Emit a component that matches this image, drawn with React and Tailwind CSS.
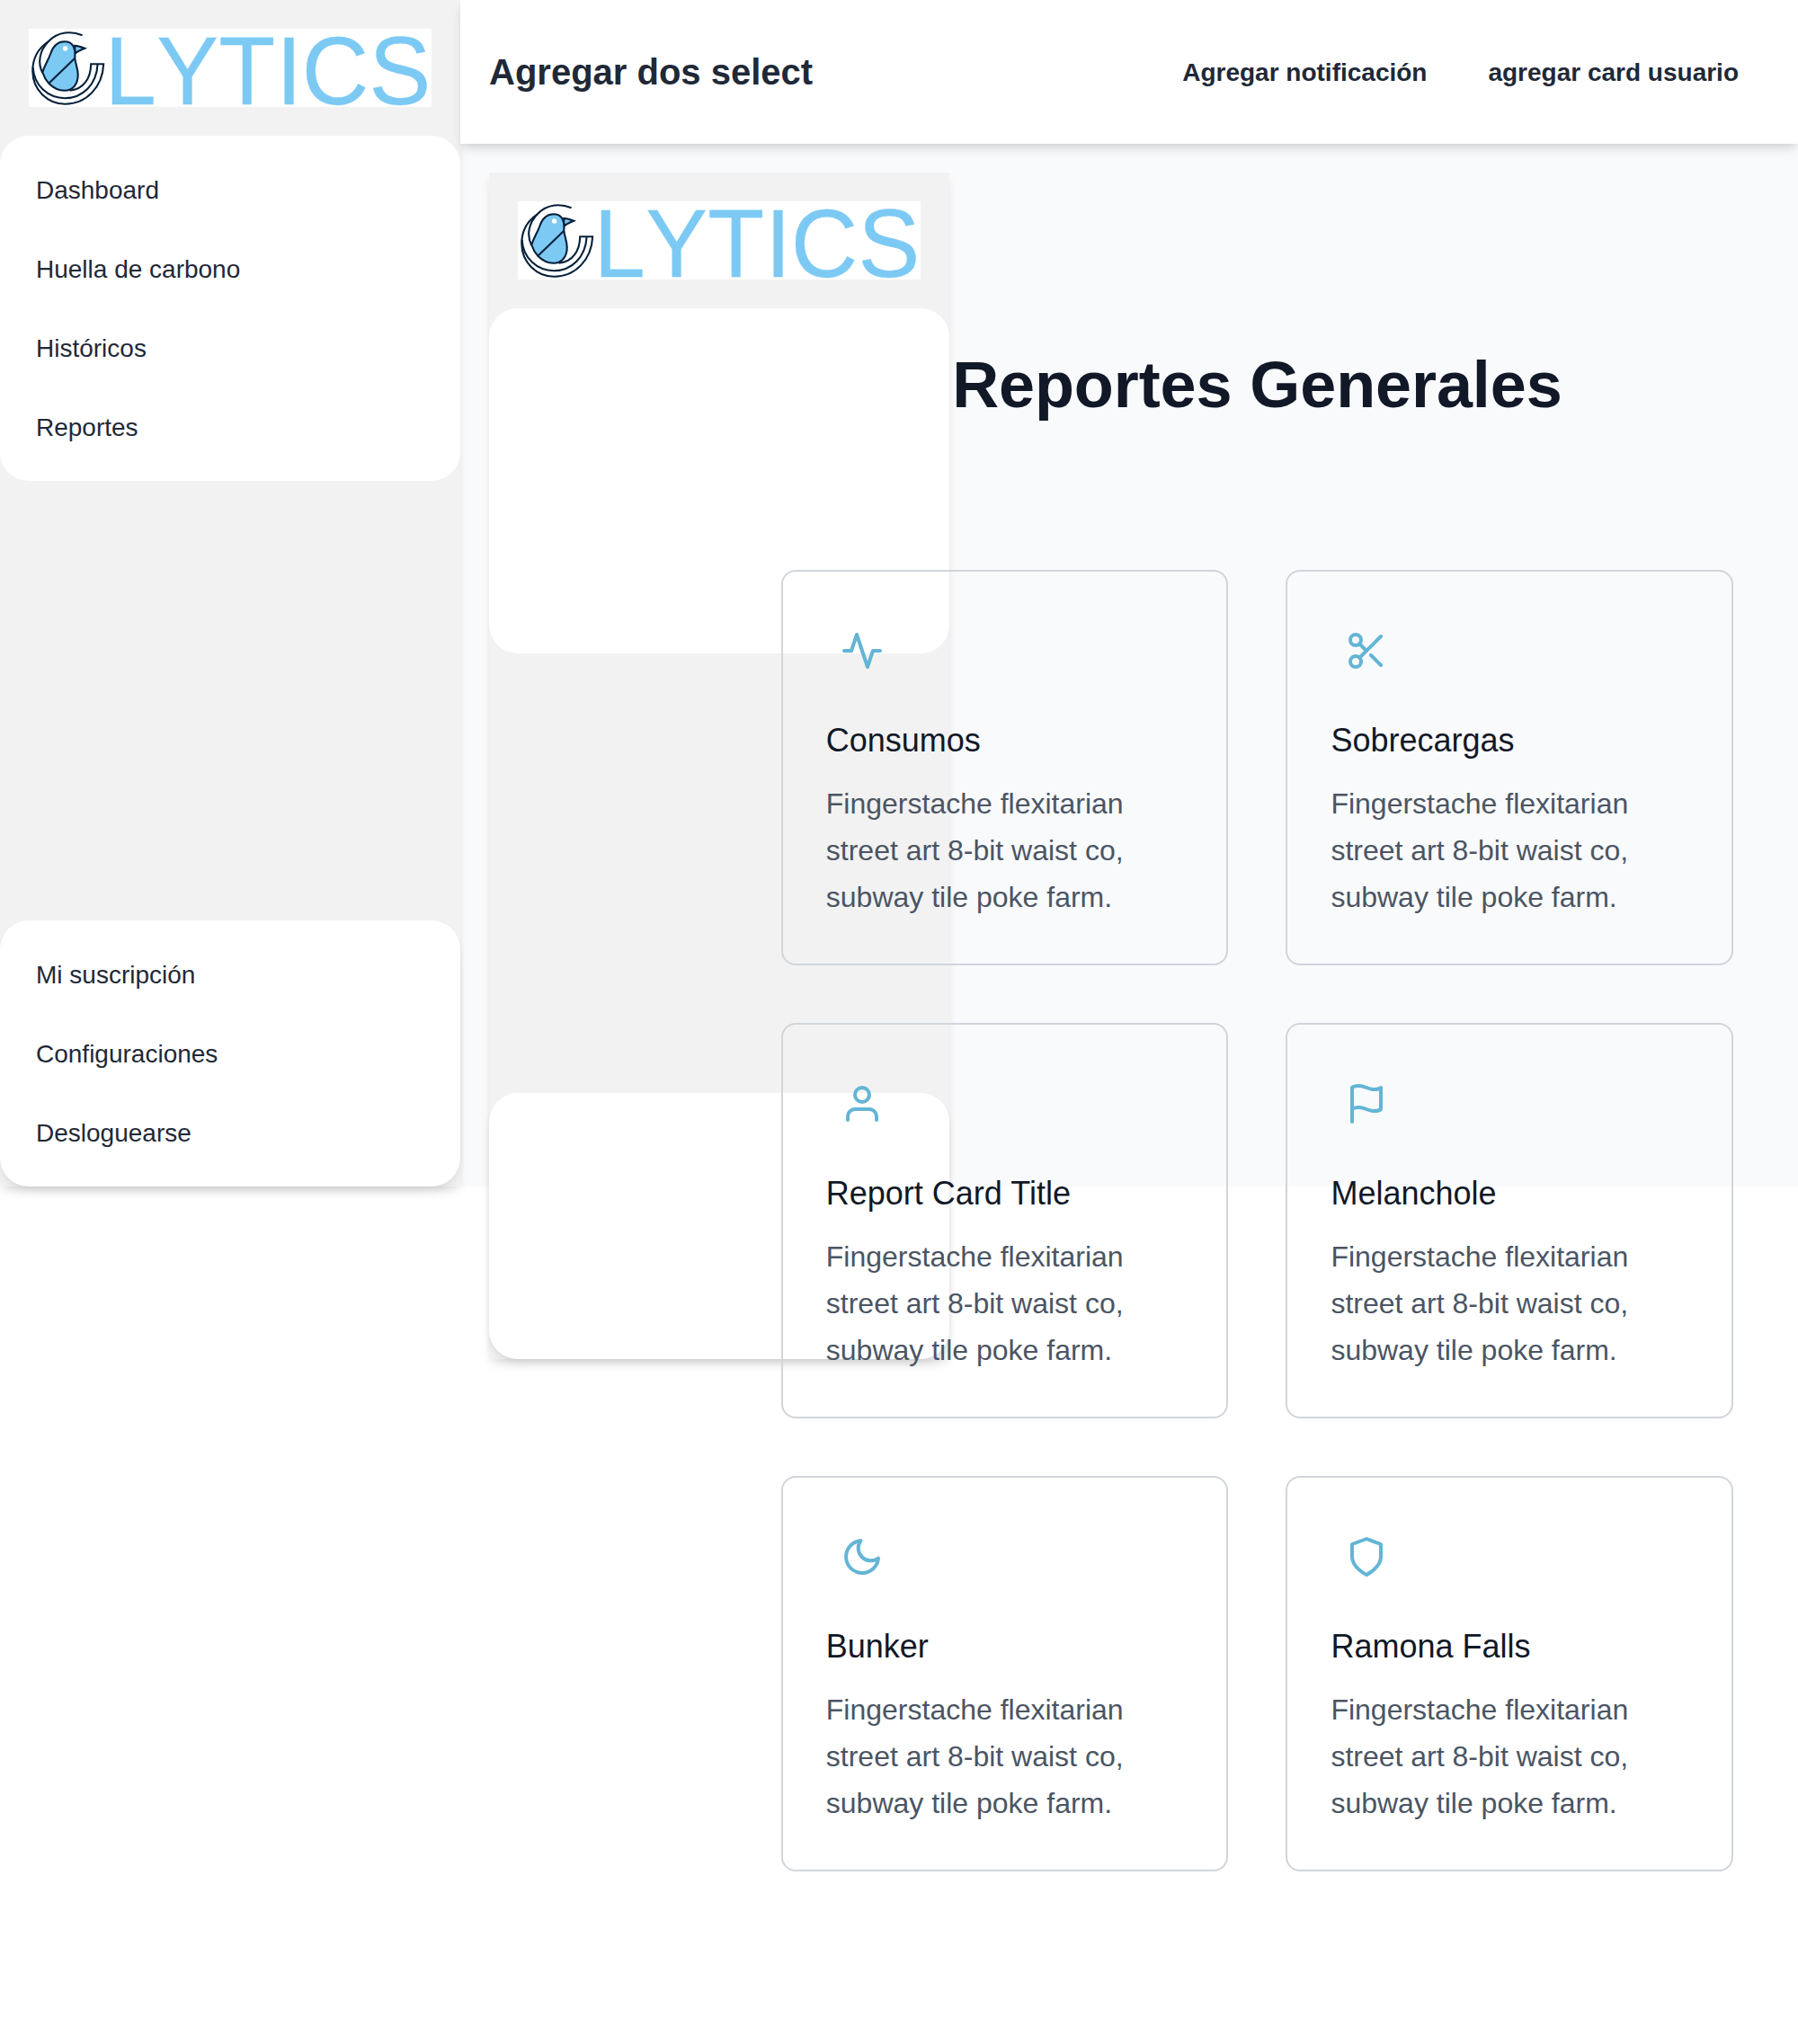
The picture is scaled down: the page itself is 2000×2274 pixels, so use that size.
import React from "react";

const PRIMARY_LINKS = ["Dashboard", "Huella de carbono", "Históricos", "Reportes"];
const SECONDARY_LINKS = ["Mi suscripción", "Configuraciones", "Desloguearse"];

const REPORTS = [
  { title: "Consumos", icon: <path d="M22 12h-4l-3 9L9 3l-3 9H2" /> },
  {
    title: "Sobrecargas",
    icon: (
      <>
        <circle cx="6" cy="6" r="3" />
        <circle cx="6" cy="18" r="3" />
        <path d="M20 4L8.12 15.88M14.47 14.48L20 20M8.12 8.12L12 12" />
      </>
    ),
  },
  {
    title: "Report Card Title",
    icon: (
      <>
        <path d="M20 21v-2a4 4 0 00-4-4H8a4 4 0 00-4 4v2" />
        <circle cx="12" cy="7" r="4" />
      </>
    ),
  },
  {
    title: "Melanchole",
    icon: <path d="M4 15s1-1 4-1 5 2 8 2 4-1 4-1V3s-1 1-4 1-5-2-8-2-4 1-4 1zM4 22v-7" />,
  },
  { title: "Bunker", icon: <path d="M21 12.79A9 9 0 1111.21 3 7 7 0 0021 12.79z" /> },
  { title: "Ramona Falls", icon: <path d="M12 22s8-4 8-10V5l-8-3-8 3v7c0 6 8 10 8 10z" /> },
];

function Logo() {
  return (
    <svg
      viewBox="0 0 448 87"
      className="block h-[87px] w-[448px] overflow-visible bg-white"
      role="img"
    >
      <g fill="none" stroke="#04203a" strokeWidth="2.1">
        <path d="M59.6 7.2C48 2.5 33 2.5 22 14C12 24 9.5 38 15.3 49" />
        <path d="M22 14C10 22 4.3 34 4.3 47C4.3 68 21 83.7 40.3 83.7C64 83.7 82 65 83.2 39.2H69.2C69 55 61 67.5 45.5 68.8" />
        <path d="M4.6 43C6 63 21 77.2 40.3 77.2C60 77.2 75.5 62 76.6 39.2" />
        <path
          d="M51.2 18.9C55 18.9 58.5 20.3 62.3 21.7C58.5 23.5 54.5 24.5 51.5 27.5Z"
          fill="#7cc9f4"
        />
        <path
          d="M51.3 32.5C52.2 21 49 14.2 39.7 14.2C31.5 14.2 27.3 19 24.5 27C21.8 35 17.8 40 15.3 48.5C17 53.5 19.3 57.5 22.3 60.7C27 65.5 32.5 68.7 39.7 68.7C50 68.7 55 60.5 54.7 50.5C54.5 43.5 51.8 38.5 51.3 32.5Z"
          fill="#7cc9f4"
        />
        <path d="M51.3 32.8L22.3 60.7" />
      </g>
      <circle cx="40.6" cy="22" r="2.7" fill="#fff" />
      <text
        transform="scale(0.96 1)"
        x="88 148.1 220.1 286.7 316.4 394.3"
        y="84.3"
        fontSize="107.4"
        fill="#7cc9f4"
        stroke="#7cc9f4"
        strokeWidth="0.3"
      >
        LYTICS
      </text>
    </svg>
  );
}

function NavCard({ links, className }) {
  return (
    <ul className={`rounded-[32px] bg-white p-4 ${className}`}>
      {links.map((label) => (
        <li key={label} className="flex h-[88px] items-center px-6 pt-0.5 text-[28px] text-[#1f2937]">
          {label}
        </li>
      ))}
    </ul>
  );
}

function Sidebar({ children, className }) {
  return (
    <aside
      className={`flex h-[1320px] w-[512px] shrink-0 flex-col bg-[#f2f2f2] shadow-[0_8px_12px_-2px_rgba(0,0,0,0.07),0_4px_8px_-2px_rgba(0,0,0,0.06)] ${className}`}
    >
      <div className="p-8">
        <Logo />
      </div>
      <div className="flex flex-1 flex-col justify-between">{children}</div>
    </aside>
  );
}

const CARD_SHADOW =
  "shadow-[0_8px_12px_-2px_rgba(0,0,0,0.06),0_4px_8px_-2px_rgba(0,0,0,0.06)]";

function ReportCard({ title, icon }) {
  return (
    <article className="h-[440px] rounded-2xl border-2 border-[#d1d5db] p-12">
      <div className="mb-8 flex size-20 items-center justify-center">
        <svg
          viewBox="0 0 24 24"
          className="size-12 text-[#63b5d5]"
          fill="none"
          stroke="currentColor"
          strokeWidth="2"
          strokeLinecap="round"
          strokeLinejoin="round"
        >
          {icon}
        </svg>
      </div>
      <h2 className="mb-4 text-[36px] leading-[56px] text-[#111827]">{title}</h2>
      <p className="text-[32px] leading-[52px] text-[#4b5563]">
        Fingerstache flexitarian street art 8-bit waist co, subway tile poke farm.
      </p>
    </article>
  );
}

export default function App() {
  return (
    <div
      className="h-[2274px] w-[2000px] bg-white"
      style={{ fontFamily: '"Liberation Sans", Arial, sans-serif' }}
    >
      <div className="flex h-[1320px] bg-[#f9fafc]">
        <Sidebar className="">
          <NavCard links={PRIMARY_LINKS} className="" />
          <NavCard links={SECONDARY_LINKS} className={CARD_SHADOW} />
        </Sidebar>

        <div className="relative flex-1">
          <header className="flex h-40 items-center justify-between bg-white pr-[66px] pl-8 font-bold text-[#1f2937] shadow-[0_8px_12px_-2px_rgba(0,0,0,0.1),0_4px_8px_-2px_rgba(0,0,0,0.08)]">
            <h1 className="text-[40px]">Agregar dos select</h1>
            <div className="flex gap-[68px] pt-0.5 text-[28px]">
              <span>Agregar notificación</span>
              <span>agregar card usuario</span>
            </div>
          </header>

          <Sidebar className="absolute top-48 left-8">
            <div className="h-[384px] rounded-[32px] bg-white" />
            <div className={`h-[296px] rounded-[32px] bg-white ${CARD_SHADOW}`} />
          </Sidebar>

          <main className="relative flex flex-col pt-[228px] pr-[72px] pl-[356.8px]">
            <h2 className="mb-[166px] text-center text-[72px] leading-[80px] font-bold tracking-[-0.1px] text-[#111827]">
              Reportes Generales
            </h2>
            <section className="grid grid-cols-2 gap-16">
              {REPORTS.map((report) => (
                <ReportCard key={report.title} {...report} />
              ))}
            </section>
          </main>
        </div>
      </div>
    </div>
  );
}
